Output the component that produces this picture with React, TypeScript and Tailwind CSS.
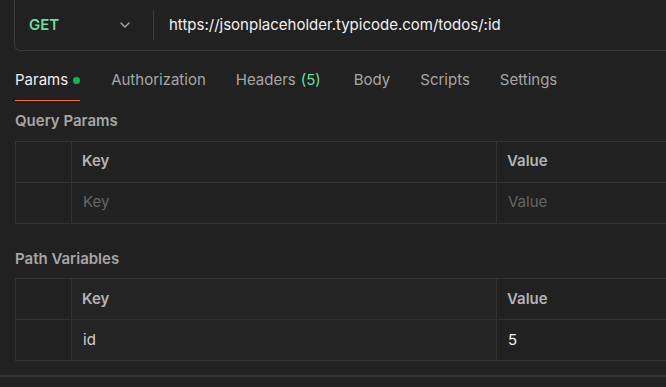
import { ChevronDown } from 'lucide-react'

const tabs = [
  { label: 'Authorization' },
  { label: 'Headers', count: '(5)' },
  { label: 'Body', extra: true },
  { label: 'Scripts' },
  { label: 'Settings' },
]

function ParamsTable({ rows, shadeKey }: { rows: { key: string; value: string; placeholder?: boolean }[]; shadeKey?: boolean }) {
  return (
    <div className="ml-[15px] w-[720px] border border-[#333333]">
      <div className="flex h-[41px] border-b border-[#333333]">
        <div className="w-[56px] border-r border-[#333333]" />
        <div className={`flex w-[425px] items-center border-r border-[#333333] pl-[10px] text-[15px] font-semibold text-[#b3b3b3] ${shadeKey ? 'bg-[#242424]' : ''}`}>
          Key
        </div>
        <div className="flex flex-1 items-center pl-[10px] text-[15px] font-semibold text-[#b3b3b3]">Value</div>
      </div>
      {rows.map((r, i) => (
        <div key={i} className="flex h-[40px]">
          <div className="w-[56px] border-r border-[#333333]" />
          <div
            className={`flex w-[425px] items-center border-r border-[#333333] pl-[11px] text-[15px] ${
              r.placeholder ? 'text-[#666666]' : 'text-[#d0d0d0]'
            } ${shadeKey ? 'bg-[#242424]' : ''}`}
          >
            {r.key}
          </div>
          <div className={`flex flex-1 items-center pl-[11px] text-[15px] ${r.placeholder ? 'text-[#666666]' : 'text-[#f2f2f2]'}`}>
            {r.value}
          </div>
        </div>
      ))}
    </div>
  )
}

export default function App() {
  return (
    <div
      className="h-[387px] w-[666px] overflow-hidden bg-[#212121]"
      style={{ fontFamily: 'Inter, "Noto Sans", sans-serif' }}
    >
      {/* request bar */}
      <div className="ml-[14px] flex h-[51px] w-[720px] items-center rounded-b-md border-x border-b border-[#3a3a3a]">
        <div className="flex w-[138px] items-center justify-between pl-[14px] pr-[20px]">
          <span className="text-[15px] font-semibold text-[#6bdd9a]">GET</span>
          <ChevronDown className="h-[16px] w-[16px] text-[#a6a6a6]" strokeWidth={2} />
        </div>
        <div className="h-[30px] w-px bg-[#3a3a3a]" />
        <div className="pl-[15px] text-[15px] text-[#f2f2f2]">https://jsonplaceholder.typicode.com/todos/:id</div>
      </div>

      {/* tabs */}
      <div className="mt-[18px] flex gap-[30px] pl-[15px] text-[15px]">
        <div className="flex flex-col">
          <div className="flex items-center gap-[5px] text-[#f0f0f0]">
            Params
            <span className="h-[7px] w-[7px] rounded-full bg-[#0cbb52]" />
          </div>
          <div className="mt-[8px] h-[1.5px] bg-[#ff6c37]" />
        </div>
        {tabs.map((t, i) => (
          <div key={t.label} className={`text-[#a6a6a6] ${i === 0 ? 'ml-px' : ''} ${t.extra ? 'ml-[3px]' : ''}`}>
            {t.label}
            {t.count && <span className="ml-[5px] text-[#6bdd9a]">{t.count}</span>}
          </div>
        ))}
      </div>

      <div className="mt-[9px] pl-[15px] text-[15px] font-semibold text-[#a6a6a6]">Query Params</div>
      <div className="mt-[8px]">
        <ParamsTable rows={[{ key: 'Key', value: 'Value', placeholder: true }]} />
      </div>

      <div className="mt-[24px] pl-[15px] text-[15px] font-semibold text-[#a6a6a6]">Path Variables</div>
      <div className="mt-[8px]">
        <ParamsTable rows={[{ key: 'id', value: '5' }]} shadeKey />
      </div>

      <div className="mt-[14px] h-[2px] bg-[#333333]" />
    </div>
  )
}
